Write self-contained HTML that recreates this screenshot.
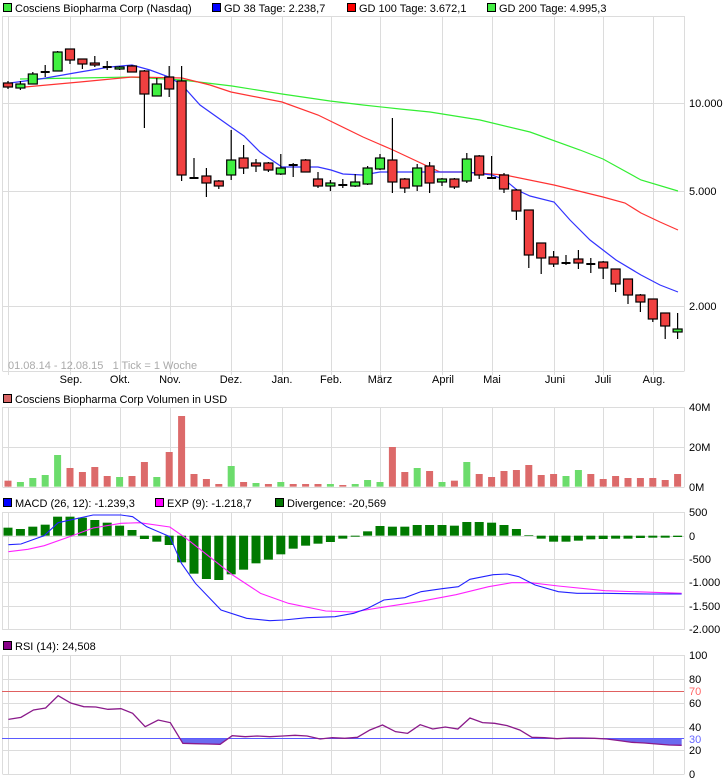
<!DOCTYPE html>
<html><head><meta charset="utf-8"><style>
html,body{margin:0;padding:0;background:#fff;}
svg{display:block;font-family:"Liberation Sans",sans-serif;font-size:11px;}
</style></head><body>
<svg width="726" height="784" viewBox="0 0 726 784" xmlns="http://www.w3.org/2000/svg">
<rect width="726" height="784" fill="#fff"/>
<g stroke="#000" stroke-width="1">
<rect x="3.5" y="3.5" width="8" height="8" fill="#3ee83e"/>
<rect x="212.5" y="3.5" width="8" height="8" fill="#0000ff"/>
<rect x="347.5" y="3.5" width="8" height="8" fill="#ff0000"/>
<rect x="487.5" y="3.5" width="8" height="8" fill="#44ee44"/>
</g>
<g fill="#000">
<text x="15" y="12">Cosciens Biopharma Corp (Nasdaq)</text>
<text x="224" y="12">GD 38 Tage: 2.238,7</text>
<text x="359" y="12">GD 100 Tage: 3.672,1</text>
<text x="499" y="12">GD 200 Tage: 4.995,3</text>
</g>
<g stroke="#dcdcdc" stroke-width="1" fill="none">
<path d="M2.5 16.5H684.5M2.5 103.5H684.5M2.5 191.5H684.5M2.5 306.5H684.5M2.5 371.5H684.5"/>
<path d="M2.5 407.5H684.5M2.5 447.5H684.5M2.5 487.5H684.5"/>
<path d="M2.5 512.5H684.5M2.5 536.5H684.5M2.5 559.5H684.5M2.5 582.5H684.5M2.5 606.5H684.5M2.5 629.5H684.5"/>
<path d="M2.5 655.5H684.5M2.5 679.5H684.5M2.5 703.5H684.5M2.5 727.5H684.5M2.5 750.5H684.5M2.5 774.5H684.5"/>
<path d="M2.5 16V371M684.5 16V371M8.5 16V375M70.5 16V375M120.5 16V375M170.5 16V375M231.5 16V375M282.5 16V375M331.5 16V375M380.5 16V375M442.5 16V375M492.5 16V375M554.5 16V375M603.5 16V375M653.5 16V375"/>
<path d="M2.5 407V487M684.5 407V487M8.5 407V487M70.5 407V487M120.5 407V487M170.5 407V487M231.5 407V487M282.5 407V487M331.5 407V487M380.5 407V487M442.5 407V487M492.5 407V487M554.5 407V487M603.5 407V487M653.5 407V487"/>
<path d="M2.5 512V630M684.5 512V630M8.5 512V630M70.5 512V630M120.5 512V630M170.5 512V630M231.5 512V630M282.5 512V630M331.5 512V630M380.5 512V630M442.5 512V630M492.5 512V630M554.5 512V630M603.5 512V630M653.5 512V630"/>
<path d="M2.5 655V774M684.5 655V774M8.5 655V774M70.5 655V774M120.5 655V774M170.5 655V774M231.5 655V774M282.5 655V774M331.5 655V774M380.5 655V774M442.5 655V774M492.5 655V774M554.5 655V774M603.5 655V774M653.5 655V774"/>
</g>
<polyline fill="none" stroke="#33ee33" stroke-width="1.2" points="20,79 80,78 130,77 182,80 232,86 282,94 330,101 363,105 400,109 430,112 480,120 530,132 580,150 603,159 641,180 678,191"/>
<polyline fill="none" stroke="#ff3333" stroke-width="1.2" points="25,87 80,82 132,77 182,78 210,85 231,92 282,102 318,115 363,137 393,150 440,172 463,172 505,175 554,185 603,197 625,203 641,213 660,222 678,230"/>
<polyline fill="none" stroke="#3333ff" stroke-width="1.2" points="10,83 40,79 80,72 110,67 132,65 150,70 169,77 182,85 200,105 231,127 244,136 260,152 282,167 300,167 318,167 331,170 343,174 363,175 380,172 430,172 467,172 492,175 505,180 517,190 530,196 554,202 570,220 590,240 603,250 616,260 641,275 660,285 678,292"/>
<g stroke="#000" stroke-width="1.2">
<path d="M8 81V89M20.4 81V90M32.8 72V84M45.2 65V77M57.6 51V71M70 49V64M82.4 59V69M94.8 56V67M107.2 61V70M119.6 66V70M132 65V72M144.4 70V128M156.8 78V96M169.2 66V97M181.6 66V181M194 158V178M206.4 168V197M218.8 180V189M231.2 130V180M243.6 145V174M256 159V172M268.4 162V172M280.8 154V175M293.2 163V177M305.6 159V172M318 172V188M330.4 180V191M342.8 179V188M355.2 174V187M367.6 166V185M380 154V170M392.4 118V193M404.8 178V193M417.2 164V191M429.6 162V193M442 178V186M454.4 178V189M466.8 153V183M479.2 155V179M491.6 156V179M504 173V193M516.4 189V220M528.8 210V268M541.2 243V274M553.6 251V267M566 255V265M578.4 250V269M590.8 258V273M603.2 261V279M615.6 269V292M628 279V304M640.4 294V312M652.8 299V322M665.2 313V339M677.6 313V339"/>
</g>
<g stroke="#000" stroke-width="1.2">
<rect x="3.5" y="83" width="9" height="4" fill="#f04040"/>
<rect x="15.9" y="84" width="9" height="4" fill="#40f040"/>
<rect x="28.3" y="74" width="9" height="10" fill="#40f040"/>
<rect x="53.1" y="52" width="9" height="19" fill="#40f040"/>
<rect x="65.5" y="49" width="9" height="11" fill="#f04040"/>
<rect x="77.9" y="59" width="9" height="5" fill="#f04040"/>
<rect x="90.3" y="63" width="9" height="2" fill="#f04040"/>
<rect x="115.1" y="67" width="9" height="2" fill="#40f040"/>
<rect x="127.5" y="66" width="9" height="6" fill="#f04040"/>
<rect x="139.9" y="71" width="9" height="23" fill="#f04040"/>
<rect x="152.3" y="84" width="9" height="12" fill="#40f040"/>
<rect x="164.7" y="77" width="9" height="12" fill="#f04040"/>
<rect x="177.1" y="81" width="9" height="94" fill="#f04040"/>
<rect x="201.9" y="176" width="9" height="7" fill="#f04040"/>
<rect x="214.3" y="181" width="9" height="5" fill="#f04040"/>
<rect x="226.7" y="160" width="9" height="15" fill="#40f040"/>
<rect x="239.1" y="158" width="9" height="10" fill="#f04040"/>
<rect x="251.5" y="163" width="9" height="3" fill="#f04040"/>
<rect x="263.9" y="163" width="9" height="7" fill="#f04040"/>
<rect x="276.3" y="168" width="9" height="6" fill="#40f040"/>
<rect x="301.1" y="160" width="9" height="12" fill="#f04040"/>
<rect x="313.5" y="179" width="9" height="7" fill="#f04040"/>
<rect x="325.9" y="183" width="9" height="3" fill="#40f040"/>
<rect x="350.7" y="182" width="9" height="4" fill="#40f040"/>
<rect x="363.1" y="168" width="9" height="16" fill="#40f040"/>
<rect x="375.5" y="158" width="9" height="11" fill="#40f040"/>
<rect x="387.9" y="160" width="9" height="22" fill="#f04040"/>
<rect x="400.3" y="179" width="9" height="9" fill="#f04040"/>
<rect x="412.7" y="168" width="9" height="18" fill="#40f040"/>
<rect x="425.1" y="166" width="9" height="17" fill="#f04040"/>
<rect x="437.5" y="179" width="9" height="3" fill="#40f040"/>
<rect x="449.9" y="179" width="9" height="8" fill="#f04040"/>
<rect x="462.3" y="159" width="9" height="22" fill="#40f040"/>
<rect x="474.7" y="156" width="9" height="19" fill="#f04040"/>
<rect x="499.5" y="175" width="9" height="14" fill="#f04040"/>
<rect x="511.9" y="190" width="9" height="21" fill="#f04040"/>
<rect x="524.3" y="210" width="9" height="45" fill="#f04040"/>
<rect x="536.7" y="243" width="9" height="15" fill="#f04040"/>
<rect x="549.1" y="257" width="9" height="7" fill="#f04040"/>
<rect x="573.9" y="259" width="9" height="4" fill="#f04040"/>
<rect x="598.7" y="262" width="9" height="6" fill="#f04040"/>
<rect x="611.1" y="269" width="9" height="15" fill="#f04040"/>
<rect x="623.5" y="279" width="9" height="16" fill="#f04040"/>
<rect x="635.9" y="295" width="9" height="7" fill="#f04040"/>
<rect x="648.3" y="299" width="9" height="20" fill="#f04040"/>
<rect x="660.7" y="313" width="9" height="13" fill="#f04040"/>
<rect x="673.1" y="329" width="9" height="3" fill="#40f040"/>
</g>
<g stroke="#000" stroke-width="2">
<path d="M40.7 72H49.7M102.7 67H111.7M189.5 178H198.5M288.7 165H297.7M338.3 185H347.3M487.1 178H496.1M561.5 263H570.5M586.3 264H595.3"/>
</g>
<g fill="#000">
<text x="689" y="107">10.000</text>
<text x="689" y="195">5.000</text>
<text x="689" y="310">2.000</text>
<g text-anchor="middle">
<text x="71" y="383">Sep.</text><text x="120" y="383">Okt.</text><text x="170" y="383">Nov.</text><text x="231" y="383">Dez.</text><text x="282" y="383">Jan.</text><text x="331" y="383">Feb.</text><text x="380" y="383">März</text><text x="443" y="383">April</text><text x="492" y="383">Mai</text><text x="555" y="383">Juni</text><text x="603" y="383">Juli</text><text x="654" y="383">Aug.</text>
</g>
</g>
<text x="8" y="369" fill="#aaaaaa">01.08.14 - 12.08.15&#160;&#160;&#160;1 Tick = 1 Woche</text>
<rect x="3.5" y="394.5" width="8" height="8" fill="#d96666" stroke="#000"/>
<text x="15" y="403" fill="#000">Cosciens Biopharma Corp Volumen in USD</text>
<g fill="#000"><text x="689" y="411">40M</text><text x="689" y="451">20M</text><text x="689" y="491">0M</text></g>
<g transform="translate(0,390) scale(1,0.33333)">
<g fill="#dc6a6a">
<rect x="4.5" y="272" width="7" height="18"/>
<rect x="66.5" y="234" width="7" height="56"/><rect x="78.9" y="246" width="7" height="44"/><rect x="91.3" y="231" width="7" height="59"/><rect x="103.7" y="258" width="7" height="32"/>
<rect x="128.5" y="258" width="7" height="32"/><rect x="140.9" y="216" width="7" height="74"/>
<rect x="165.7" y="186" width="7" height="104"/><rect x="178.1" y="78" width="7" height="212"/><rect x="190.5" y="252" width="7" height="38"/><rect x="202.9" y="267" width="7" height="23"/><rect x="215.3" y="282" width="7" height="8"/>
<rect x="240.1" y="276" width="7" height="14"/><rect x="264.9" y="282" width="7" height="8"/><rect x="289.7" y="282" width="7" height="8"/><rect x="302.1" y="282" width="7" height="8"/><rect x="314.5" y="282" width="7" height="8"/><rect x="339.3" y="285" width="7" height="5"/>
<rect x="388.9" y="171" width="7" height="119"/><rect x="401.3" y="246" width="7" height="44"/><rect x="426.1" y="243" width="7" height="47"/><rect x="450.9" y="272" width="7" height="18"/>
<rect x="475.7" y="252" width="7" height="38"/><rect x="488.1" y="261" width="7" height="29"/><rect x="500.5" y="243" width="7" height="47"/><rect x="512.9" y="240" width="7" height="50"/><rect x="525.3" y="225" width="7" height="65"/><rect x="537.7" y="255" width="7" height="35"/><rect x="550.1" y="252" width="7" height="38"/>
<rect x="587.3" y="252" width="7" height="38"/><rect x="599.7" y="267" width="7" height="23"/><rect x="612.1" y="258" width="7" height="32"/><rect x="624.5" y="264" width="7" height="26"/><rect x="636.9" y="264" width="7" height="26"/><rect x="649.3" y="264" width="7" height="26"/><rect x="661.7" y="270" width="7" height="20"/><rect x="674.1" y="252" width="7" height="38"/>
</g>
<g fill="#6cdc6c">
<rect x="16.9" y="276" width="7" height="14"/><rect x="29.3" y="264" width="7" height="26"/><rect x="41.7" y="255" width="7" height="35"/><rect x="54.1" y="195" width="7" height="95"/>
<rect x="116.1" y="261" width="7" height="29"/><rect x="153.3" y="261" width="7" height="29"/>
<rect x="227.7" y="228" width="7" height="62"/><rect x="252.5" y="279" width="7" height="11"/><rect x="277.3" y="276" width="7" height="14"/><rect x="326.9" y="282" width="7" height="8"/><rect x="351.7" y="282" width="7" height="8"/><rect x="364.1" y="270" width="7" height="20"/><rect x="376.5" y="276" width="7" height="14"/>
<rect x="413.7" y="234" width="7" height="56"/><rect x="438.5" y="276" width="7" height="14"/><rect x="463.3" y="216" width="7" height="74"/>
<rect x="562.5" y="258" width="7" height="32"/><rect x="574.9" y="240" width="7" height="50"/>
</g>
</g>
<g stroke="#000"><rect x="3.5" y="498.5" width="8" height="8" fill="#0000ff"/><rect x="155.5" y="498.5" width="8" height="8" fill="#ff00ff"/><rect x="275.5" y="498.5" width="8" height="8" fill="#007700"/></g>
<g fill="#000"><text x="15" y="507">MACD (26, 12): -1.239,3</text><text x="167" y="507">EXP (9): -1.218,7</text><text x="287" y="507">Divergence: -20,569</text>
<text x="689" y="516">500</text><text x="689" y="540">0</text><text x="689" y="563">-500</text><text x="689" y="586">-1.000</text><text x="689" y="610">-1.500</text><text x="689" y="633">-2.000</text></g>
<g transform="translate(0,390) scale(1,0.33333)" fill="#007a00">
<rect x="3.5" y="413" width="9" height="24"/><rect x="15.9" y="417" width="9" height="20"/><rect x="28.3" y="410" width="9" height="27"/><rect x="40.7" y="404" width="9" height="33"/><rect x="53.1" y="380" width="9" height="57"/><rect x="65.5" y="380" width="9" height="57"/><rect x="77.9" y="383" width="9" height="54"/><rect x="90.3" y="390" width="9" height="47"/><rect x="102.7" y="398" width="9" height="39"/><rect x="115.1" y="407" width="9" height="30"/><rect x="127.5" y="420" width="9" height="17"/>
<rect x="139.9" y="437" width="9" height="10"/><rect x="152.3" y="437" width="9" height="18"/><rect x="164.7" y="437" width="9" height="28"/><rect x="177.1" y="437" width="9" height="80"/><rect x="189.5" y="437" width="9" height="114"/><rect x="201.9" y="437" width="9" height="130"/><rect x="214.3" y="437" width="9" height="133"/><rect x="226.7" y="437" width="9" height="116"/><rect x="239.1" y="437" width="9" height="102"/><rect x="251.5" y="437" width="9" height="83"/><rect x="263.9" y="437" width="9" height="72"/><rect x="276.3" y="437" width="9" height="56"/><rect x="288.7" y="437" width="9" height="39"/><rect x="301.1" y="437" width="9" height="30"/><rect x="313.5" y="437" width="9" height="24"/><rect x="325.9" y="437" width="9" height="19"/><rect x="338.3" y="437" width="9" height="9"/><rect x="350.7" y="437" width="9" height="3"/>
<rect x="363.1" y="424" width="9" height="13"/><rect x="375.5" y="408" width="9" height="29"/><rect x="387.9" y="410" width="9" height="27"/><rect x="400.3" y="410" width="9" height="27"/><rect x="412.7" y="405" width="9" height="32"/><rect x="425.1" y="405" width="9" height="32"/><rect x="437.5" y="405" width="9" height="32"/><rect x="449.9" y="407" width="9" height="30"/><rect x="462.3" y="396" width="9" height="41"/><rect x="474.7" y="396" width="9" height="41"/><rect x="487.1" y="398" width="9" height="39"/><rect x="499.5" y="405" width="9" height="32"/><rect x="511.9" y="417" width="9" height="20"/><rect x="524.3" y="435" width="9" height="2"/>
<rect x="536.7" y="437" width="9" height="9"/><rect x="549.1" y="437" width="9" height="18"/><rect x="561.5" y="437" width="9" height="18"/><rect x="573.9" y="437" width="9" height="15"/><rect x="586.3" y="437" width="9" height="11"/><rect x="598.7" y="437" width="9" height="10"/><rect x="611.1" y="437" width="9" height="9"/><rect x="623.5" y="437" width="9" height="9"/><rect x="635.9" y="437" width="9" height="7"/><rect x="648.3" y="437" width="9" height="6"/><rect x="660.7" y="437" width="9" height="6"/><rect x="673.1" y="437" width="9" height="4"/>
</g>
<g transform="translate(0,390) scale(0.4653,0.33333)" fill="none" stroke-width="1.1">
<polyline vector-effect="non-scaling-stroke" stroke="#ff22ff" points="18,485 60,478 95,467 150,440 200,414 260,400 300,398 365,411 400,445 450,500 500,555 560,610 620,640 700,663 760,666 830,650 900,635 980,614 1050,590 1100,578 1140,578 1200,588 1300,602 1465,610"/>
<polyline vector-effect="non-scaling-stroke" stroke="#2222ff" points="18,464 45,462 95,437 125,398 200,375 260,375 285,380 315,410 365,440 390,520 420,580 475,660 530,685 580,692 610,690 660,683 720,680 760,670 790,655 825,630 870,623 905,605 950,596 985,590 1010,568 1060,554 1090,552 1115,560 1150,585 1200,605 1240,610 1300,610 1400,612 1465,612"/>
</g>
<rect x="3.5" y="641.5" width="8" height="8" fill="#880088" stroke="#000"/>
<text x="15" y="650" fill="#000">RSI (14): 24,508</text>
<g fill="#000"><text x="689" y="659">100</text><text x="689" y="683">80</text><text x="689" y="707">60</text><text x="689" y="731">40</text><text x="689" y="754">20</text><text x="689" y="778">0</text></g>
<text x="689" y="695" fill="#ff6666">70</text>
<text x="689" y="743" fill="#6666ff">30</text>
<g transform="translate(0,630) scale(0.4653,0.33333)">
<polygon fill="#6a6af0" points="385,325 393,340 420,341 447,342 473,343 490,325"/>
<polygon fill="#6a6af0" points="1300,325 1331,332 1358,337 1385,339 1411,342 1438,345 1465,346 1465,325"/>
</g>
<path d="M2 691.5H684" stroke="#e06060" stroke-width="1"/>
<path d="M2 738.5H684" stroke="#5a5aff" stroke-width="1"/>
<g transform="translate(0,630) scale(0.4653,0.33333)" fill="none">
<polyline vector-effect="non-scaling-stroke" stroke="#8a1a8a" stroke-width="1.3" points="18,268 45,262 72,240 98,234 125,197 152,219 180,230 206,231 232,238 260,236 285,250 312,290 340,270 366,278 393,340 420,341 447,342 473,343 499,317 527,320 553,318 580,320 608,318 634,316 660,318 688,327 714,323 741,325 768,322 795,300 822,285 850,305 876,310 903,284 930,297 957,291 984,297 1010,264 1037,278 1063,280 1090,287 1117,300 1143,322 1170,323 1197,326 1224,324 1250,324 1278,325 1304,327 1331,332 1358,337 1385,339 1411,342 1438,345 1465,346"/>
</g>
</svg>
</body></html>
